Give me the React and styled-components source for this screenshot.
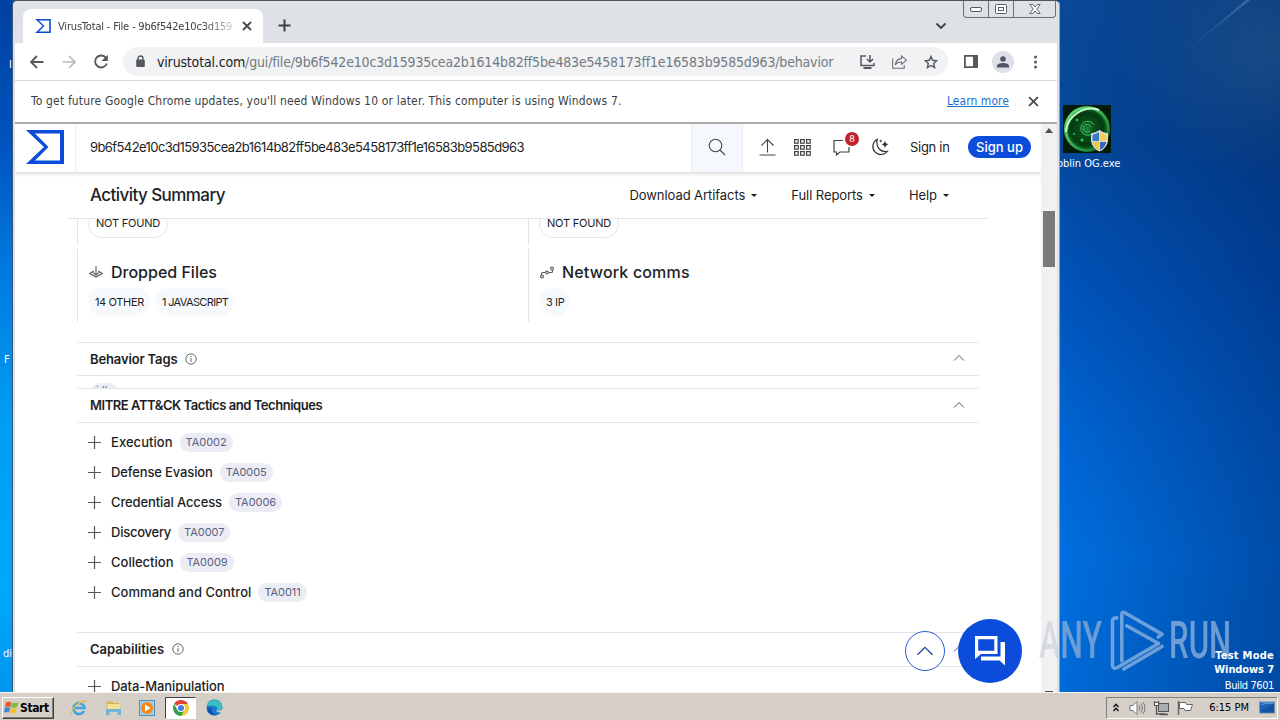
import React from "react";
import styled, { createGlobalStyle } from "styled-components";

const GlobalStyle = createGlobalStyle`
  * {
    box-sizing: border-box;
  }
  body {
    margin: 0;
    overflow: hidden;
  }
`;

const ui = `"DejaVu Sans Condensed", "DejaVu Sans", sans-serif`;
const web = `Inter, "Liberation Sans", sans-serif`;

/* ---------- desktop ---------- */

const Screen = styled.div`
  display: flex;
  flex-direction: column;
  width: 1280px;
  height: 720px;
  overflow: hidden;
  font-family: ${ui};
`;

const Desktop = styled.div`
  position: relative;
  height: 692px;
  overflow: hidden;
  background: radial-gradient(
      150px 130px at 1270px 50px,
      rgba(50, 100, 140, 0.4),
      rgba(50, 100, 140, 0)
    ),
    linear-gradient(
      90deg,
      rgba(0, 30, 90, 0) 1060px,
      rgba(0, 30, 90, 0.42) 1280px
    ),
    linear-gradient(#0a4a98, #04479a 20%, #0054bb 42%, #0064d2 62%, #006fe0 80%, #006ad8);
`;

const LeftStrip = styled.div`
  position: absolute;
  left: 0;
  top: 0;
  width: 12px;
  height: 692px;
  background: linear-gradient(#0041a0, #0052bd 20%, #0078de 38%, #009cf4 60%, #00a8fb 85%, #0096f0);
`;

const Rays = styled.svg`
  position: absolute;
  left: 1060px;
  top: 0;
`;

const DeskLabel = styled.span`
  position: absolute;
  left: ${(p) => p.$x}px;
  top: ${(p) => p.$y}px;
  color: #fff;
  font-size: 11px;
  line-height: 14px;
  letter-spacing: ${(p) => p.$ls || 0}px;
  white-space: nowrap;
`;

const DeskIcon = styled.svg`
  position: absolute;
  left: 1063px;
  top: 105px;
`;

const TestMode = styled.div`
  position: absolute;
  right: 6px;
  top: 649px;
  display: flex;
  flex-direction: column;
  align-items: flex-end;
  color: #fff;
  font-size: 11px;
  line-height: 14px;
  span {
    margin-top: 2px;
    letter-spacing: -0.4px;
  }
`;

const TestLine = styled.b`
  letter-spacing: ${(p) => p.$ls}px;
`;

const Watermark = styled.div`
  position: absolute;
  left: 1039px;
  top: 608px;
  display: flex;
  width: 194px;
  height: 66px;
  opacity: 0.55;
`;

const MarkText = styled.span`
  width: ${(p) => p.$w}px;
  margin-left: ${(p) => p.$left || 0}px;
  color: ${(p) => p.$fill || "#c6d6ea"};
  font: 500 52px/66px Roboto, sans-serif;
  transform: scaleX(${(p) => p.$scale});
  transform-origin: 0 50%;
  white-space: nowrap;
`;

/* ---------- window ---------- */

const Window = styled.div`
  position: absolute;
  left: 12px;
  top: 0;
  display: flex;
  flex-direction: column;
  width: 1048px;
  height: 692px;
  border-top: 1px solid #55555f;
  border-left: 1px solid #3b5878;
  border-right: 1px solid #8fa3b8;
  border-radius: 5px 5px 0 0;
  background: #dee1e6;
  padding: 0 2px;
  overflow: hidden;
`;

const TabStrip = styled.div`
  display: flex;
  height: 42px;
  padding-left: 8px;
`;

const Tab = styled.div`
  display: flex;
  align-items: center;
  width: 240px;
  height: 34px;
  margin-top: 8px;
  padding: 0 11px 0 12px;
  border-radius: 8px 8px 0 0;
  background: #fff;
`;

const TabTitle = styled.span`
  flex: 1;
  margin: 0 9px 0 7px;
  overflow: hidden;
  white-space: nowrap;
  font-size: 11px;
  letter-spacing: -0.18px;
  color: #3c4043;
  mask-image: linear-gradient(90deg, #000 82%, rgba(0, 0, 0, 0.25));
`;

const NewTab = styled.svg`
  margin: 18px 0 0 15px;
`;

const TabSearch = styled.svg`
  margin: 19px 16px 0 auto;
`;

const WinButtons = styled.div`
  display: flex;
  width: 93px;
  height: 17px;
  margin-right: 1px;
  border: 1px solid #6d7078;
  border-top: 0;
  border-radius: 0 0 4px 4px;
`;

const WinButton = styled.div`
  display: flex;
  align-items: center;
  justify-content: center;
  width: ${(p) => p.$w}px;
  border-left: ${(p) => (p.$first ? 0 : 1)}px solid #6d7078;
`;

const Toolbar = styled.div`
  display: flex;
  align-items: center;
  height: 38px;
  padding: 0 14px;
  background: #fff;
  border-bottom: 1px solid #d8d9dc;
`;

const NavIcon = styled.svg`
  flex: none;
  margin-left: ${(p) => p.$left || 0}px;
  margin-right: ${(p) => p.$gap || 0}px;
`;

const Omnibox = styled.div`
  display: flex;
  align-items: center;
  width: 825px;
  height: 29px;
  margin-left: 14px;
  padding: 0 10px 0 12px;
  border-radius: 15px;
  background: #f0f2f4;
  white-space: nowrap;
`;

const Url = styled.span`
  flex: 1;
  margin-left: 11px;
  font-size: 14px;
  color: #74797e;
  letter-spacing: -0.165px;
  b {
    font-weight: 400;
    color: #202124;
  }
`;

const Avatar = styled.div`
  display: flex;
  flex: none;
  align-items: center;
  justify-content: center;
  width: 22px;
  height: 22px;
  margin: 0 20px 0 14px;
  border-radius: 50%;
  background: #dde0e7;
`;

const InfoBar = styled.div`
  display: flex;
  align-items: center;
  height: 41px;
  padding: 0 18px 1px 16px;
  background: #fff;
  color: #3c3f43;
  font-size: 12px;
  white-space: nowrap;
`;

const InfoText = styled.span`
  flex: 1;
  letter-spacing: 0.165px;
`;

const LearnMore = styled.span`
  margin-right: 19px;
  color: #1a6fd0;
  letter-spacing: 0.05px;
  text-decoration: underline;
`;

const Viewport = styled.div`
  display: flex;
  height: 570px;
  border-top: 2px solid #ababab;
  background: #fff;
`;

const Scrollbar = styled.div`
  display: flex;
  flex: none;
  flex-direction: column;
  align-items: center;
  width: 16px;
  background: #f1f1f1;
`;

const ScrollArrow = styled.div`
  border: 4px solid transparent;
  border-top: 0;
  border-bottom: 5px solid #505050;
  margin-top: 4px;
`;

const Thumb = styled.div`
  width: 12px;
  height: 56px;
  margin-top: 78px;
  background: #7b7b7b;
`;

const ScrollFoot = styled.div`
  width: 8px;
  height: 1px;
  margin-top: auto;
  background: #505050;
`;

/* ---------- page ---------- */

const Page = styled.div`
  position: relative;
  display: flex;
  flex: 1;
  flex-direction: column;
  overflow: hidden;
  font-family: ${web};
  color: #1c1e24;
  white-space: nowrap;
`;

const Header = styled.div`
  display: flex;
  flex: none;
  align-items: center;
  height: 48px;
  box-shadow: 0 2px 4px rgba(0, 0, 0, 0.14);
`;

const LogoBox = styled.div`
  display: flex;
  align-items: center;
  width: 61px;
  height: 48px;
  padding: 0 0 2px 11px;
  border-right: 1px solid #ececee;
`;

const Query = styled.span`
  flex: 1;
  padding: 0 0 2px 14px;
  font-size: 13px;
  letter-spacing: -0.585px;
`;

const SearchBox = styled.div`
  display: flex;
  align-items: center;
  justify-content: center;
  width: 52px;
  height: 48px;
  padding-bottom: 2px;
  border: 1px solid #e9edf1;
  border-width: 0 1px;
  background: #f5f9fe;
`;

const HeaderActions = styled.div`
  display: flex;
  align-items: center;
  width: 298px;
  height: 48px;
  padding: 0 0 2px 16px;
`;

const ActionIcon = styled.div`
  position: relative;
  display: flex;
  margin-right: ${(p) => p.$gap}px;
`;

const Badge = styled.span`
  position: absolute;
  left: 12px;
  top: -6px;
  width: 14px;
  height: 14px;
  border-radius: 50%;
  background: #c1222a;
  color: #fff;
  font-size: 9px;
  line-height: 14px;
  text-align: center;
`;

const SignIn = styled.span`
  font-size: 13px;
  letter-spacing: -0.3px;
`;

const SignUp = styled.span`
  width: 63px;
  height: 22px;
  margin-left: auto;
  margin-right: 10px;
  border-radius: 11px;
  background: #0b4dda;
  color: #fff;
  font-size: 13px;
  font-weight: 500;
  line-height: 22px;
  text-align: center;
`;

const SummaryBar = styled.div`
  display: flex;
  flex: none;
  align-items: center;
  width: 921px;
  height: 47px;
  margin-left: 52px;
  padding: 0 39px 1px 23px;
  border-bottom: 1px solid #e4e5e8;
  gap: 34px;
`;

const SummaryTitle = styled.span`
  flex: 1;
  font-size: 17px;
  font-weight: 500;
  letter-spacing: -0.57px;
`;

const MenuLabel = styled.span`
  display: flex;
  align-items: center;
  gap: 6px;
  font-size: 13px;
  letter-spacing: -0.07px;
  &::after {
    content: "";
    border: 3px solid transparent;
    border-top-color: #1c1e24;
    border-bottom: 0;
    margin-top: 1px;
  }
`;

const Body = styled.div`
  width: 902px;
  margin-left: 62px;
`;

const Columns = styled.div`
  display: grid;
  grid-template-columns: 451px 451px;
  height: ${(p) => p.$h}px;
  margin-bottom: ${(p) => p.$gap}px;
`;

const Cell = styled.div`
  padding-left: 10px;
  border-left: 1px solid #e3e4e8;
  overflow: hidden;
`;

const OutlineChip = styled.div`
  width: 80px;
  height: 28px;
  margin-top: -9px;
  border: 1px solid #e6e7ea;
  border-radius: 14px;
  font-size: 11px;
  line-height: 25px;
  letter-spacing: -0.2px;
  text-align: center;
`;

const CellTitle = styled.div`
  display: flex;
  align-items: center;
  height: 20px;
  margin: 13px 0 6px 1px;
  gap: 8px;
  font-size: 16px;
  font-weight: 500;
  letter-spacing: ${(p) => p.$ls}px;
`;

const ChipRow = styled.div`
  display: flex;
  gap: 5px;
`;

const SoftChip = styled.span`
  height: 28px;
  padding: 0 6px 0 7px;
  border-radius: 14px;
  background: #f7fafd;
  font-size: 11px;
  line-height: 28px;
  letter-spacing: ${(p) => p.$ls}px;
`;

const SectionHead = styled.div`
  display: flex;
  align-items: center;
  height: ${(p) => p.$h}px;
  padding: 0 14px 1px 13px;
  border: 1px solid #e4e5e8;
  border-width: 1px 0;
  background: #fff;
  font-size: 13px;
  font-weight: 600;
  letter-spacing: ${(p) => p.$ls}px;
`;

const InfoDot = styled.svg`
  margin-left: 8px;
`;

const ChevronSlot = styled.span`
  display: flex;
  margin: 0 0 1px auto;
`;

const TagPeek = styled.div`
  height: 12px;
  padding: 7px 0 0 14px;
  overflow: hidden;
`;

const Tag = styled.div`
  width: 27px;
  height: 18px;
  border-radius: 9px;
  background: #ecedf4;
  color: #5d6280;
  font-size: 10px;
  line-height: 14px;
  text-align: center;
`;

const Tactics = styled.div`
  height: ${(p) => p.$h}px;
  padding: 4px 0 0 11px;
`;

const Tactic = styled.div`
  display: flex;
  align-items: center;
  height: 30px;
  font-size: 13px;
  font-weight: 500;
  letter-spacing: ${(p) => p.$ls || 0}px;
`;

const Plus = styled.svg`
  margin-right: 10px;
`;

const TacticId = styled.span`
  height: 19px;
  margin-left: 7px;
  padding: 0 6px;
  border-radius: 10px;
  background: #ebecf4;
  color: #5c6180;
  font-size: 11px;
  font-weight: 400;
  line-height: 19px;
  letter-spacing: -0.05px;
`;

const ToTop = styled.div`
  position: absolute;
  left: 890px;
  top: 507px;
  display: flex;
  align-items: center;
  justify-content: center;
  width: 40px;
  height: 40px;
  border: 1px solid #2a5bd0;
  border-radius: 50%;
  background: #fff;
`;

const ChatFab = styled.div`
  position: absolute;
  left: 943px;
  top: 495px;
  display: flex;
  align-items: center;
  justify-content: center;
  width: 64px;
  height: 64px;
  border-radius: 50%;
  background: #0b4dda;
`;

/* ---------- taskbar ---------- */

const Taskbar = styled.div`
  display: flex;
  align-items: center;
  height: 28px;
  padding: 2px 2px 0;
  border-top: 1px solid #f6f4f0;
  background: #d5cfc8;
`;

const StartButton = styled.div`
  display: flex;
  align-items: center;
  width: 52px;
  height: 22px;
  padding-left: 1px;
  gap: 1px;
  border: 1px solid;
  border-color: #fff #404040 #404040 #fff;
  box-shadow: inset -1px -1px 0 #808080;
  font-size: 12px;
  font-weight: 700;
  letter-spacing: -0.4px;
`;

const TaskIcon = styled.div`
  display: flex;
  align-items: center;
  justify-content: center;
  width: ${(p) => (p.$active ? 31 : 24)}px;
  height: 22px;
  margin-left: ${(p) => p.$gap}px;
  border: ${(p) => (p.$active ? 1 : 0)}px solid;
  border-color: #404040 #fff #fff #404040;
  background: ${(p) => (p.$active ? "#fff" : "transparent")};
`;

const Tray = styled.div`
  display: flex;
  align-items: center;
  width: 172px;
  height: 22px;
  margin-left: auto;
  padding: 0 1px 0 6px;
  border: 1px solid;
  border-color: #808080 #fff #fff #808080;
`;

const TrayIcon = styled.svg`
  margin-left: ${(p) => p.$gap || 0}px;
`;

const Clock = styled.span`
  margin: 0 10px 0 auto;
  font-size: 11px;
`;

const tactics = [
  { name: "Execution", id: "TA0002", ls: 0.05 },
  { name: "Defense Evasion", id: "TA0005", ls: -0.13 },
  { name: "Credential Access", id: "TA0006", ls: -0.12 },
  { name: "Discovery", id: "TA0007", ls: -0.25 },
  { name: "Collection", id: "TA0009", ls: 0 },
  { name: "Command and Control", id: "TA0011", ls: 0.05 },
];

const Cross = ({ size, width = 2 }) => (
  <svg width={size} height={size} viewBox="0 0 10 10" stroke="#45484d" strokeWidth={width}>
    <path d="M1 1l8 8M9 1l-8 8" />
  </svg>
);

const Sigma = ({ width, height }) => (
  <svg width={width} height={height} viewBox="0 0 38 34">
    <path fill="#0b4dda" fillRule="evenodd" d="M0 0H38V34H0L18 17ZM9 3.5L22.5 17L9 30.5H34V3.5Z" />
  </svg>
);

const UpChevron = ({ size = 12, color = "#55585e", width = 1 }) => (
  <svg width={size} height={size} viewBox="0 0 12 12" fill="none" stroke={color} strokeWidth={width}>
    <path d="M1 8.500L6 3.500l5 5" />
  </svg>
);

const Info = () => (
  <InfoDot width="12" height="12" viewBox="0 0 12 12" fill="none" stroke="#55585e">
    <circle cx="6" cy="6" r="5.200" strokeWidth=".9" />
    <path d="M6 5.200V8.800M6 3v1.100" />
  </InfoDot>
);

const PlusIcon = () => (
  <Plus width="13" height="13" viewBox="0 0 13 13" stroke="#55585d">
    <path d="M0 6.500h13M6.500 0v13" strokeWidth="1.200" />
  </Plus>
);

const Section = ({ title, info, h, ls = 0 }) => (
  <SectionHead $h={h} $ls={ls}>
    {title}
    {info ? <Info /> : null}
    <ChevronSlot>
      <UpChevron />
    </ChevronSlot>
  </SectionHead>
);

const Browser = () => (
  <Window>
    <TabStrip>
      <Tab>
        <Sigma width={16} height={14} />
        <TabTitle>VirusTotal - File - 9b6f542e10c3d15935cea</TabTitle>
        <Cross size={10} width={1.8} />
      </Tab>
      <NewTab width="13" height="13" viewBox="0 0 13 13" stroke="#3c4043" strokeWidth="2">
        <path d="M6.500.500v12M.500 6.500h12" />
      </NewTab>
      <TabSearch width="12" height="12" viewBox="0 0 12 12" fill="none" stroke="#3c4043" strokeWidth="1.800">
        <path d="M1.500 3.500L6 8l4.500-4.500" />
      </TabSearch>
      <WinButtons>
        <WinButton $w={24} $first>
          <svg width="12" height="5" viewBox="0 0 12 5">
            <rect x=".5" y=".5" width="11" height="4" rx="1.500" fill="#fff" stroke="#555963" />
          </svg>
        </WinButton>
        <WinButton $w={25}>
          <svg width="12" height="10" viewBox="0 0 12 10" fill="#fff" stroke="#555963">
            <rect x=".5" y=".5" width="11" height="9" rx="1" />
            <rect x="3.500" y="3.500" width="5" height="3" />
          </svg>
        </WinButton>
        <WinButton $w={42}>
          <svg width="12" height="10" viewBox="0 0 12 10" fill="#fff" stroke="#555963" strokeWidth=".9">
            <path d="M.8.500h3L6 3 8.200.500h3L7.800 5l3.400 4.500h-3L6 7 3.800 9.500h-3L4.200 5Z" />
          </svg>
        </WinButton>
      </WinButtons>
    </TabStrip>

    <Toolbar>
      <NavIcon $gap={16} width="16" height="16" viewBox="0 0 16 16" fill="none" stroke="#55595e" strokeWidth="1.800">
        <path d="M14.500 8H2M8 2L2 8L8 14" />
      </NavIcon>
      <NavIcon $gap={16} width="16" height="16" viewBox="0 0 16 16" fill="none" stroke="#b9bbbe" strokeWidth="1.700">
        <path d="M1.500 8H14M8 2L14 8L8 14" />
      </NavIcon>
      <NavIcon width="16" height="16" viewBox="0 0 16 16" fill="none" stroke="#55595e" strokeWidth="1.900">
        <path d="M13 4A6 6 0 1 0 13.800 9.500" />
        <path d="M14.800.800V7H8.600Z" fill="#55595e" stroke="none" />
      </NavIcon>
      <Omnibox>
        <svg width="11" height="13" viewBox="0 0 11 13">
          <rect x="1.200" y="4.500" width="8.600" height="7.500" rx="1" fill="#55595e" />
          <path d="M3 5V3.500a2.500 2.500 0 0 1 5 0V5" fill="none" stroke="#55595e" strokeWidth="1.400" />
        </svg>
        <Url>
          <b>virustotal.com</b>
          /gui/file/9b6f542e10c3d15935cea2b1614b82ff5be483e5458173ff1e16583b9585d963/behavior
        </Url>
        <NavIcon $gap={17} width="15" height="14" viewBox="0 0 15 14" fill="none" stroke="#55595e" strokeWidth="1.500">
          <path d="M6 1H1v9.500h13V8" />
          <path d="M3.500 13h8" strokeWidth="2.200" />
          <path d="M10 0v6.500M7 4l3 3 3-3" />
        </NavIcon>
        <NavIcon $gap={17} width="15" height="14" viewBox="0 0 15 14" fill="none" stroke="#6a6d72" strokeWidth="1.100">
          <path d="M.7 3.500v9.800h11.500V10" />
          <path d="M9.500 1l5 4.200-5 4.200V7C6.500 7 4.500 8 3.300 10 3.600 6.500 5.500 4 9.500 3.400Z" />
        </NavIcon>
        <NavIcon width="14" height="14" viewBox="0 0 24 24" fill="none" stroke="#55595e" strokeWidth="2.400">
          <path d="M12 2.500l2.900 6.600 7.100.7-5.400 4.800 1.600 7L12 17.900l-6.200 3.700 1.600-7L2 9.800l7.100-.7Z" />
        </NavIcon>
      </Omnibox>
      <NavIcon $left={16} width="14" height="13" viewBox="0 0 14 13">
        <path fill="#55595e" fillRule="evenodd" d="M0 0H14V13H0ZM1.800 1.800V11.200H9V1.800Z" />
      </NavIcon>
      <Avatar>
        <svg width="12" height="12" viewBox="0 0 12 12" fill="#4d5567">
          <circle cx="6" cy="3" r="2.800" />
          <path d="M0 11.500V10c0-2 3-3 6-3s6 1 6 3v1.500Z" />
        </svg>
      </Avatar>
      <NavIcon width="4" height="14" viewBox="0 0 4 14" fill="#55595e">
        <circle cx="1.500" cy="2" r="1.500" />
        <circle cx="1.500" cy="7" r="1.500" />
        <circle cx="1.500" cy="12" r="1.500" />
      </NavIcon>
    </Toolbar>

    <InfoBar>
      <InfoText>
        To get future Google Chrome updates, you'll need Windows 10 or later. This computer is using Windows 7.
      </InfoText>
      <LearnMore>Learn more</LearnMore>
      <Cross size={11} width={1.6} />
    </InfoBar>

    <Viewport>
      <Page>
        <Header>
          <LogoBox>
            <Sigma width={38} height={34} />
          </LogoBox>
          <Query>9b6f542e10c3d15935cea2b1614b82ff5be483e5458173ff1e16583b9585d963</Query>
          <SearchBox>
            <svg width="18" height="18" viewBox="0 0 18 18" fill="none" stroke="#3f4247" strokeWidth="1.100">
              <circle cx="7.500" cy="7.500" r="6.300" />
              <path d="M12 12l5 5" />
            </svg>
          </SearchBox>
          <HeaderActions>
            <ActionIcon $gap={18}>
              <svg width="17" height="18" viewBox="0 0 17 18" fill="none" stroke="#3f4247" strokeWidth="1.100">
                <path d="M8.500 14.500V1.500M2.500 7.500l6-6 6 6M.500 17h16" />
              </svg>
            </ActionIcon>
            <ActionIcon $gap={22}>
              <svg width="17" height="17" viewBox="0 0 17 17" fill="none" stroke="#3f4247" strokeWidth="1.200">
                {[0.6, 6.6, 12.6].map((y) =>
                  [0.6, 6.6, 12.6].map((x) => (
                    <rect key={`${x}-${y}`} x={x} y={y} width="3.600" height="3.600" />
                  ))
                )}
              </svg>
            </ActionIcon>
            <ActionIcon $gap={21}>
              <svg width="17" height="18" viewBox="0 0 17 18" fill="none" stroke="#3f4247" strokeWidth="1.200">
                <path d="M10 2.500H1V14h2.500v3L7 14h9V9" />
              </svg>
              <Badge>8</Badge>
            </ActionIcon>
            <ActionIcon $gap={21}>
              <svg width="18" height="18" viewBox="0 0 17 17" fill="none" stroke="#2f3237" strokeWidth="1.100">
                <path d="M6 1.200A7.600 7.600 0 1 0 15.500 12.500C9 14 4 8 6 1.200Z" />
                <path fill="#2f3237" stroke="none" d="M13.200 2.800l1 2.200 2.200 1-2.200 1-1 2.200-1-2.200-2.200-1 2.200-1ZM9.200 1.200l.5 1.100 1.100.5-1.100.5-.5 1.100-.5-1.100-1.100-.5 1.100-.5Z" />
              </svg>
            </ActionIcon>
            <SignIn>Sign in</SignIn>
            <SignUp>Sign up</SignUp>
          </HeaderActions>
        </Header>

        <SummaryBar>
          <SummaryTitle>Activity Summary</SummaryTitle>
          <MenuLabel>Download Artifacts</MenuLabel>
          <MenuLabel>Full Reports</MenuLabel>
          <MenuLabel>Help</MenuLabel>
        </SummaryBar>

        <Body>
          <Columns $h={26} $gap={4}>
            <Cell>
              <OutlineChip>NOT FOUND</OutlineChip>
            </Cell>
            <Cell>
              <OutlineChip>NOT FOUND</OutlineChip>
            </Cell>
          </Columns>
          <Columns $h={73} $gap={20}>
            <Cell>
              <CellTitle $ls={0}>
                <svg width="14" height="14" viewBox="0 0 14 14" fill="none" stroke="#5a5d62" strokeWidth="1.100">
                  <path d="M4.800 6L.8 8.500 7 12l6.200-3.500-4-2.500M7 1v8M4 7.500L7 10l3-2.500" />
                </svg>
                Dropped Files
              </CellTitle>
              <ChipRow>
                <SoftChip $ls={-0.35}>14 OTHER</SoftChip>
                <SoftChip $ls={-0.65}>1 JAVASCRIPT</SoftChip>
              </ChipRow>
            </Cell>
            <Cell>
              <CellTitle $ls={0.17}>
                <svg width="14" height="14" viewBox="0 0 14 14" fill="none" stroke="#5a5d62" strokeWidth="1.100">
                  <circle cx="2" cy="11.500" r="1.400" />
                  <circle cx="7" cy="7.500" r="1.400" />
                  <circle cx="12" cy="3.500" r="1.400" />
                  <path d="M1.500 10V8.500q0-1 1-1h3M8.500 7.500h3q1 0 1-1V5" />
                </svg>
                Network comms
              </CellTitle>
              <ChipRow>
                <SoftChip $ls={-0.4}>3 IP</SoftChip>
              </ChipRow>
            </Cell>
          </Columns>

          <Section title="Behavior Tags" info h={34} ls={-0.14} />
          <TagPeek>
            <Tag>idle</Tag>
          </TagPeek>
          <Section title="MITRE ATT&CK Tactics and Techniques" h={35} ls={-0.45} />
          <Tactics $h={209}>
            {tactics.map((t) => (
              <Tactic key={t.id} $ls={t.ls}>
                <PlusIcon />
                {t.name}
                <TacticId>{t.id}</TacticId>
              </Tactic>
            ))}
          </Tactics>
          <Section title="Capabilities" info h={35} ls={0.02} />
          <Tactics $h={35}>
            <Tactic $ls={-0.08}>
              <PlusIcon />
              Data-Manipulation
            </Tactic>
          </Tactics>
        </Body>

        <ToTop>
          <UpChevron size={18} color="#1b3f9a" width={0.8} />
        </ToTop>
        <ChatFab>
          <svg width="32" height="32" viewBox="0 0 32 32">
            <path fill="#fff" fillRule="evenodd" d="M1 1H23.500V19H7L1 24ZM4.200 4.200V15.800H20.300V4.200Z" />
            <path fill="#fff" d="M26.500 7H31V30.500L25.500 25.500H7V21.500H26.500Z" />
          </svg>
        </ChatFab>
      </Page>
      <Scrollbar>
        <ScrollArrow />
        <Thumb />
        <ScrollFoot />
      </Scrollbar>
    </Viewport>
  </Window>
);

const App = () => {
  return (
    <>
      <GlobalStyle />
      <Screen>
        <Desktop>
          <Rays width="220" height="120">
            <defs>
              <linearGradient id="ray" x1="1" y1="0" x2="0" y2="1">
                <stop offset="0" stopColor="#6fa6dc" stopOpacity=".4" />
                <stop offset="1" stopColor="#6fa6dc" stopOpacity="0" />
              </linearGradient>
            </defs>
            <path d="M186 0h4L118 58Z" fill="url(#ray)" />
          </Rays>
          <LeftStrip />
          <DeskLabel $x={9} $y={58}>l</DeskLabel>
          <DeskLabel $x={4} $y={353}>F</DeskLabel>
          <DeskLabel $x={3} $y={647}>di</DeskLabel>
          <DeskLabel $x={1057} $y={157}>oblin OG.exe</DeskLabel>
          <DeskIcon width="48" height="48" viewBox="0 0 48 48">
            <defs>
              <radialGradient id="orb">
                <stop offset="0" stopColor="#1a8a3a" />
                <stop offset=".3" stopColor="#0b4f1c" />
                <stop offset=".75" stopColor="#053a12" />
                <stop offset="1" stopColor="#0b8a2a" />
              </radialGradient>
              <linearGradient id="rim" x1="0" y1="0" x2="1" y2="1">
                <stop offset="0" stopColor="#7dff92" />
                <stop offset="1" stopColor="#0e6a24" />
              </linearGradient>
            </defs>
            <rect width="48" height="48" fill="#031b08" />
            <circle cx="24" cy="24" r="22" fill="url(#orb)" />
            <circle cx="24" cy="24" r="21.500" fill="none" stroke="url(#rim)" strokeWidth="3" opacity=".85" />
            <path d="M36 5C22 0 4 10 3 27" fill="none" stroke="#c6ffcf" strokeWidth="2" />
            <path d="M31 20a7 7 0 1 0-1 8M28 22a4 4 0 1 0-1 4" fill="none" stroke="#3fc765" strokeWidth="1" />
            <circle cx="14" cy="15" r="1.200" fill="#2bd04f" />
            <circle cx="19" cy="35" r="1.500" fill="#2bd04f" />
            <circle cx="11" cy="29" r="1" fill="#2bd04f" />
            <path d="M36.500 25q4 3 8.500 3.500V36q-1 7-8.500 10.500Q29 43 28 36V28.500q4.500-.5 8.500-3.500Z" fill="#d9dde2" />
            <path d="M36 27v9h-6.500v-6.200q3.500-.6 6.500-2.800Z" fill="#3a78c8" />
            <path d="M37 27v9h6.500v-6.200q-3.500-.6-6.500-2.800Z" fill="#f3cf5a" />
            <path d="M36 37v8q-5.500-3-6.400-8Z" fill="#f3c344" />
            <path d="M37 37v8q5.500-3 6.400-8Z" fill="#2f69b8" />
          </DeskIcon>
          <Browser />
          <Watermark>
            <MarkText $w={71} $scale={0.615} $fill="#c3cad4">ANY</MarkText>
            <svg width="56" height="66" viewBox="0 0 56 66" fill="none" stroke="#c6d6ea" strokeWidth="3.600" strokeLinejoin="round" strokeLinecap="round">
              <path d="M7 9.500Q2.500 9 2.500 13V58Q3 62 7.500 60L49.500 35.500L17 17.500" />
              <path d="M12 53V6Q12 2.500 15.500 4.500L53 26L49 29" />
              <path d="M53 38.500L14 61.500" />
            </svg>
            <MarkText $w={64} $left={4} $scale={0.6}>RUN</MarkText>
          </Watermark>
          <TestMode>
            <TestLine $ls={0.25}>Test Mode</TestLine>
            <TestLine $ls={-0.1}>Windows 7</TestLine>
            <span>Build 7601</span>
          </TestMode>
        </Desktop>

        <Taskbar>
          <StartButton>
            <svg width="15" height="15" viewBox="0 0 15 15">
              <path d="M2 2.500q2.500-1.500 5.300 0L6.300 7Q3.500 5.800 1 7Z" fill="#e8572b" />
              <path d="M8 2.800q3 1.200 6.500-.8L13 6.800q-3 1.500-6 .4Z" fill="#7cb843" />
              <path d="M.8 7.800q2.500-1.200 5.300 0L5 12.500q-2.500-1.200-5 0Z" fill="#3f86d8" />
              <path d="M6.800 8q3 1.200 6 -.3L11.500 12.500q-3 1.500-5.700.3Z" fill="#f8bf2c" />
            </svg>
            Start
          </StartButton>
          <TaskIcon $gap={13}>
            <svg width="18" height="18" viewBox="0 0 18 18" fill="none">
              <path d="M14 12A5.500 5.500 0 1 1 14.500 9H5" stroke="#3fa4e4" strokeWidth="2.600" />
              <path d="M1.500 15.500C0 11 10 1 16.500 2.500" stroke="#e8c14a" strokeWidth="1.400" />
            </svg>
          </TaskIcon>
          <TaskIcon $gap={10}>
            <svg width="17" height="16" viewBox="0 0 17 16">
              <path d="M1.500 1.500h6l1 1.500H14V12H1.500Z" fill="#d9b548" />
              <path d="M2.500 4h12v8h-12Z" fill="#f5e08f" />
              <path d="M1 9h15v6h-3.500v-3h-8v3H1Z" fill="#6fb4da" />
            </svg>
          </TaskIcon>
          <TaskIcon $gap={10}>
            <svg width="16" height="16" viewBox="0 0 16 16">
              <rect x=".5" y=".5" width="15" height="15" fill="#a9cbe6" stroke="#4e8fc4" />
              <circle cx="8" cy="8" r="6" fill="#f08a1d" />
              <path d="M6 4.500L11.500 8 6 11.500Z" fill="#fff" />
            </svg>
          </TaskIcon>
          <TaskIcon $gap={6} $active>
            <svg width="16" height="16" viewBox="0 0 16 16">
              <path d="M8 8L1.100 4A8 8 0 0 1 14.900 4Z" fill="#df4232" />
              <path d="M8 4H14.900A8 8 0 0 1 8 16L11 9.500Z" fill="#f7c92f" />
              <path d="M8 8L11.500 10L8 16A8 8 0 0 1 1.100 4L4.500 10Z" fill="#35a04c" />
              <circle cx="8" cy="8" r="4" fill="#fff" />
              <circle cx="8" cy="8" r="3" fill="#3f7de8" />
            </svg>
          </TaskIcon>
          <TaskIcon $gap={6}>
            <svg width="17" height="17" viewBox="0 0 17 17">
              <circle cx="8.500" cy="8.500" r="8" fill="#1a78d0" />
              <path d="M.6 8A8 8 0 0 1 16.500 8c0 3-3 4-6 3.200 1.500-2 .5-4-2.500-4.200C4 6.500 1.500 6.500.6 8Z" fill="#38c0c0" />
              <path d="M5.500 8.500C4 12 7 16 11.500 15.800 7 17.500 1.500 14 1 10Z" fill="#1250a8" />
              <path d="M10 11.200c2 .8 4 .8 6.500-.6l-1 2.600q-4.500 1.200-5.500-2Z" fill="#d5cfc8" />
            </svg>
          </TaskIcon>
          <Tray>
            <TrayIcon width="6" height="9" viewBox="0 0 6 9" fill="none" stroke="#111" strokeWidth="1.300">
              <path d="M.5 4L3 1.200 5.500 4M.5 8L3 5.200 5.500 8" />
            </TrayIcon>
            <TrayIcon $gap={10} width="17" height="16" viewBox="0 0 17 16" fill="none" stroke="#777">
              <path d="M1 5.500h3L8 1.500v13l-4-4H1Z" fill="#fff" />
              <path d="M10 5.500q1.500 2.500 0 5M12 3.500q3 4.500 0 9M14 2q4 6 0 12" />
            </TrayIcon>
            <TrayIcon $gap={7} width="17" height="16" viewBox="0 0 17 16" fill="none" stroke="#555">
              <rect x="5.500" y="3.500" width="10" height="8" fill="#a9abad" />
              <path d="M1.500 1v4h4V1M3.500 5v9H13M7 14.500h8" strokeWidth="1.300" />
              <rect x="1.500" y="2.500" width="4" height="3" fill="#fff" />
            </TrayIcon>
            <TrayIcon $gap={7} width="16" height="16" viewBox="0 0 16 16" stroke="#666">
              <path d="M1.500 1v14" strokeWidth="1.500" />
              <path d="M2.500 2.500h6l1 2h6l-2 6H8l-1-2H2.500Z" fill="#fff" />
            </TrayIcon>
            <Clock>6:15 PM</Clock>
            <TrayIcon width="17" height="14" viewBox="0 0 17 14">
              <rect x=".5" y="1" width="15" height="11" fill="#1b62b8" stroke="#7d96b0" />
              <path d="M1 11.500L15 2v9.500Z" fill="#164f9c" />
              <path d="M2 3.500q5-2 12-1" stroke="#5fa3e6" fill="none" />
            </TrayIcon>
          </Tray>
        </Taskbar>
      </Screen>
    </>
  );
};

export default App;
